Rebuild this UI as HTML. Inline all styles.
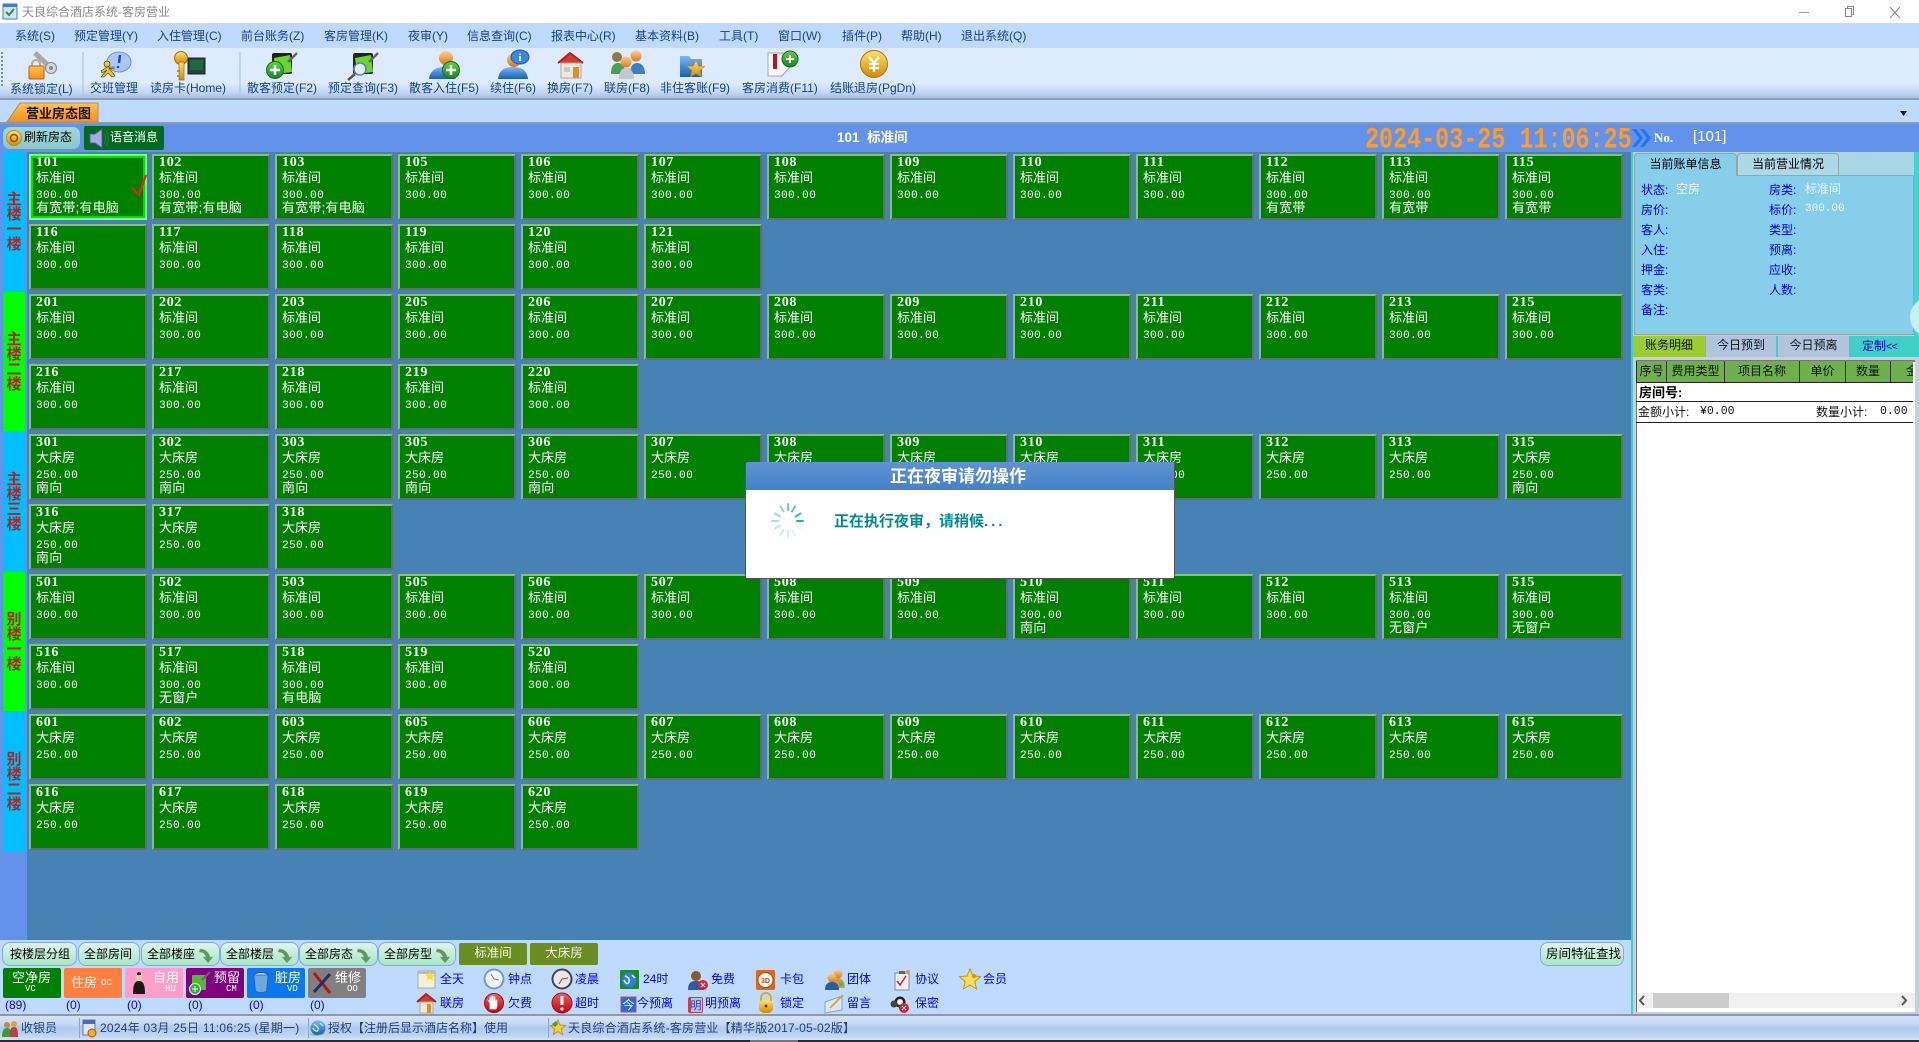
<!DOCTYPE html>
<html lang="zh"><head><meta charset="utf-8"><title>天良综合酒店系统-客房营业</title>
<style>
*{margin:0;padding:0;box-sizing:border-box}
html,body{width:1919px;height:1042px;overflow:hidden;background:#fff}
body{position:relative;font:12px "Liberation Sans","Noto Sans CJK SC",sans-serif;color:#15428b}
.a,.a>span{position:absolute;white-space:nowrap}
.m span{top:28px;line-height:16px}
.tb span{top:80px;line-height:16px}
#stage{position:absolute;left:0;top:0;width:1919px;height:1042px;pointer-events:none}
.r{position:absolute;left:29px;display:flex;gap:5px}
.t{width:118px;height:66px;background:#008000;border:2px solid;border-color:#92b592 #5f735f #5f735f #92b592;padding-left:5px;color:#fff;font-family:"Liberation Sans","WenQuanYi Zen Hei","Noto Sans CJK SC",sans-serif;overflow:hidden}
.t b,.t i,.t u,.t em{display:block;font-style:normal;text-decoration:none;white-space:nowrap}
.t b{font:bold 14px/14px "Liberation Serif",serif;letter-spacing:.7px;height:14px}
.t i{font-size:13px;line-height:16px;height:16px}
.t u{font:11.2px/16px "Liberation Mono",monospace;height:16px;letter-spacing:.3px;position:relative;top:2px}
.t em{font-size:13px;line-height:12px;height:13px;letter-spacing:.2px}
.t.sel{border-color:#7fff7f;box-shadow:inset 0 0 0 2px #00e000}
.f{position:absolute;left:3px;width:22px;color:#b22222;font:bold 15px/15px "Liberation Sans","Noto Sans CJK SC",sans-serif;text-align:center;display:flex;flex-direction:column;justify-content:center}
.btn{position:absolute;top:942px;height:24px;border:1px solid #7fa8f2;border-radius:8px;background:linear-gradient(#dff4ea,#a6e6c6);color:#000;font-size:12px;line-height:22px;padding-left:7px;white-space:nowrap}
.ol{position:absolute;top:943px;height:22px;background:#6b8e23;border-radius:2px;color:#f4f4e4;font-size:12.5px;line-height:21px;text-align:center}
.lg{position:absolute;top:968px;height:30px;width:58px;border-radius:2px;color:#fff;font-size:13px}
.lg span{position:absolute;white-space:nowrap;line-height:14px}
.lg small{position:absolute;font:9px/10px "Liberation Mono",monospace;white-space:nowrap}
.cnt{position:absolute;top:998px;color:#0000ff;font:12px/14px "Liberation Sans",sans-serif}
.li{position:absolute;color:#0000ff;font-size:12px;line-height:14px;white-space:nowrap}
.k{position:absolute;color:#0000e0;font-size:12px;line-height:16px;white-space:nowrap;margin-top:1px}
.v{position:absolute;color:#eaf8ff;font-size:12px;line-height:16px;white-space:nowrap;margin-top:1px}
.th{position:absolute;top:361px;height:22px;background:#6db04c;border-left:1px solid #333;color:#111;font-size:12px;line-height:21px;text-align:center;overflow:hidden;white-space:nowrap}
</style></head><body>

<!-- title bar -->
<div class="a" style="left:22px;top:4px;color:#8a8a8a;line-height:16px">天良综合酒店系统-客房营业</div>

<!-- menu -->
<div class="a" style="left:0;top:23px;width:1919px;height:25px;background:#bedbff"></div>
<div class="a m" style="left:0;top:0">
<span style="left:15px">系统(S)</span><span style="left:74px">预定管理(Y)</span><span style="left:157px">入住管理(C)</span><span style="left:241px">前台账务(Z)</span><span style="left:324px">客房管理(K)</span><span style="left:408px">夜审(Y)</span><span style="left:467px">信息查询(C)</span><span style="left:551px">报表中心(R)</span><span style="left:635px">基本资料(B)</span><span style="left:719px">工具(T)</span><span style="left:778px">窗口(W)</span><span style="left:842px">插件(P)</span><span style="left:901px">帮助(H)</span><span style="left:961px">退出系统(Q)</span>
</div>

<!-- toolbar -->
<div class="a" style="left:0;top:48px;width:1919px;height:50px;background:linear-gradient(#deebfd 0,#dcebff 70%,#c4d8f4 88%,#a8c0e2 100%)"></div>
<div class="a" style="left:0;top:98px;width:1919px;height:2px;background:#8b9db8"></div>
<div class="a tb" style="left:0;top:0">
<span style="left:10px;top:81px">系统锁定(L)</span><span style="left:90px">交班管理</span><span style="left:150px">读房卡(Home)</span><span style="left:247px">散客预定(F2)</span><span style="left:328px">预定查询(F3)</span><span style="left:409px">散客入住(F5)</span><span style="left:490px">续住(F6)</span><span style="left:547px">换房(F7)</span><span style="left:604px">联房(F8)</span><span style="left:660px">非住客账(F9)</span><span style="left:742px">客房消费(F11)</span><span style="left:830px">结账退房(PgDn)</span>
</div>

<!-- tab strip -->
<div class="a" style="left:0;top:100px;width:1919px;height:22px;background:#bedbff"></div>
<div class="a" style="left:0;top:122px;width:1919px;height:2px;background:#8f9aa8"></div>

<!-- main -->
<div class="a" style="left:0;top:124px;width:1919px;height:28px;background:#6392ea"></div>
<div class="a" style="left:0;top:152px;width:27px;height:788px;background:#6392ea"></div>
<div class="a" style="left:27px;top:152px;width:1604px;height:788px;background:#4682b4"></div>

<div class="a" style="left:3px;top:127px;width:77px;height:22px;border-radius:7px;background:linear-gradient(#9fd8d4,#8cc8c8);color:#000;font-size:12px;line-height:21px;padding-left:21px">刷新房态</div>
<div class="a" style="left:84px;top:126px;width:80px;height:24px;border-radius:2px;background:#006b1e;color:#fff;font-size:12px;line-height:23px;padding-left:26px">语音消息</div>
<div class="a" style="left:837px;top:129px;color:#fff;font:bold 13.5px/18px 'Liberation Sans','Noto Sans CJK SC',sans-serif;white-space:pre">101  标准间</div>

<!-- clock -->
<div class="a" style="left:1365px;top:126px;color:#ff9c28;font:bold 23.4px/24px 'Liberation Mono',monospace;transform:scaleY(1.25);transform-origin:0 0;white-space:pre">2024-03-25 11:06:25</div>
<div class="a" style="left:1654px;top:129px;color:#fff;font:bold 13px/18px 'Liberation Serif',serif">No.</div>
<div class="a" style="left:1693px;top:128px;color:#fff;font:15px/18px 'Liberation Sans',sans-serif">[101]</div>

<!-- floor labels -->
<div class="f" style="top:152px;height:139px;background:#00bfff">主<br>楼<br>一<br>楼</div>
<div class="f" style="top:292px;height:139px;background:#00ff00">主<br>楼<br>二<br>楼</div>
<div class="f" style="top:432px;height:139px;background:#00bfff">主<br>楼<br>三<br>楼</div>
<div class="f" style="top:572px;height:139px;background:#00ff00">别<br>楼<br>一<br>楼</div>
<div class="f" style="top:712px;height:140px;background:#00bfff">别<br>楼<br>二<br>楼</div>

<!-- rooms -->
<div class="r" style="top:154px">
<div class="t sel"><b>101</b><i>标准间</i><u>300.00</u><em>有宽带;有电脑</em></div>
<div class="t"><b>102</b><i>标准间</i><u>300.00</u><em>有宽带;有电脑</em></div>
<div class="t"><b>103</b><i>标准间</i><u>300.00</u><em>有宽带;有电脑</em></div>
<div class="t"><b>105</b><i>标准间</i><u>300.00</u></div>
<div class="t"><b>106</b><i>标准间</i><u>300.00</u></div>
<div class="t"><b>107</b><i>标准间</i><u>300.00</u></div>
<div class="t"><b>108</b><i>标准间</i><u>300.00</u></div>
<div class="t"><b>109</b><i>标准间</i><u>300.00</u></div>
<div class="t"><b>110</b><i>标准间</i><u>300.00</u></div>
<div class="t"><b>111</b><i>标准间</i><u>300.00</u></div>
<div class="t"><b>112</b><i>标准间</i><u>300.00</u><em>有宽带</em></div>
<div class="t"><b>113</b><i>标准间</i><u>300.00</u><em>有宽带</em></div>
<div class="t"><b>115</b><i>标准间</i><u>300.00</u><em>有宽带</em></div>
</div>
<div class="r" style="top:224px">
<div class="t"><b>116</b><i>标准间</i><u>300.00</u></div>
<div class="t"><b>117</b><i>标准间</i><u>300.00</u></div>
<div class="t"><b>118</b><i>标准间</i><u>300.00</u></div>
<div class="t"><b>119</b><i>标准间</i><u>300.00</u></div>
<div class="t"><b>120</b><i>标准间</i><u>300.00</u></div>
<div class="t"><b>121</b><i>标准间</i><u>300.00</u></div>
</div>
<div class="r" style="top:294px">
<div class="t"><b>201</b><i>标准间</i><u>300.00</u></div>
<div class="t"><b>202</b><i>标准间</i><u>300.00</u></div>
<div class="t"><b>203</b><i>标准间</i><u>300.00</u></div>
<div class="t"><b>205</b><i>标准间</i><u>300.00</u></div>
<div class="t"><b>206</b><i>标准间</i><u>300.00</u></div>
<div class="t"><b>207</b><i>标准间</i><u>300.00</u></div>
<div class="t"><b>208</b><i>标准间</i><u>300.00</u></div>
<div class="t"><b>209</b><i>标准间</i><u>300.00</u></div>
<div class="t"><b>210</b><i>标准间</i><u>300.00</u></div>
<div class="t"><b>211</b><i>标准间</i><u>300.00</u></div>
<div class="t"><b>212</b><i>标准间</i><u>300.00</u></div>
<div class="t"><b>213</b><i>标准间</i><u>300.00</u></div>
<div class="t"><b>215</b><i>标准间</i><u>300.00</u></div>
</div>
<div class="r" style="top:364px">
<div class="t"><b>216</b><i>标准间</i><u>300.00</u></div>
<div class="t"><b>217</b><i>标准间</i><u>300.00</u></div>
<div class="t"><b>218</b><i>标准间</i><u>300.00</u></div>
<div class="t"><b>219</b><i>标准间</i><u>300.00</u></div>
<div class="t"><b>220</b><i>标准间</i><u>300.00</u></div>
</div>
<div class="r" style="top:434px">
<div class="t"><b>301</b><i>大床房</i><u>250.00</u><em>南向</em></div>
<div class="t"><b>302</b><i>大床房</i><u>250.00</u><em>南向</em></div>
<div class="t"><b>303</b><i>大床房</i><u>250.00</u><em>南向</em></div>
<div class="t"><b>305</b><i>大床房</i><u>250.00</u><em>南向</em></div>
<div class="t"><b>306</b><i>大床房</i><u>250.00</u><em>南向</em></div>
<div class="t"><b>307</b><i>大床房</i><u>250.00</u></div>
<div class="t"><b>308</b><i>大床房</i><u>250.00</u></div>
<div class="t"><b>309</b><i>大床房</i><u>250.00</u></div>
<div class="t"><b>310</b><i>大床房</i><u>250.00</u></div>
<div class="t"><b>311</b><i>大床房</i><u>250.00</u></div>
<div class="t"><b>312</b><i>大床房</i><u>250.00</u></div>
<div class="t"><b>313</b><i>大床房</i><u>250.00</u></div>
<div class="t"><b>315</b><i>大床房</i><u>250.00</u><em>南向</em></div>
</div>
<div class="r" style="top:504px">
<div class="t"><b>316</b><i>大床房</i><u>250.00</u><em>南向</em></div>
<div class="t"><b>317</b><i>大床房</i><u>250.00</u></div>
<div class="t"><b>318</b><i>大床房</i><u>250.00</u></div>
</div>
<div class="r" style="top:574px">
<div class="t"><b>501</b><i>标准间</i><u>300.00</u></div>
<div class="t"><b>502</b><i>标准间</i><u>300.00</u></div>
<div class="t"><b>503</b><i>标准间</i><u>300.00</u></div>
<div class="t"><b>505</b><i>标准间</i><u>300.00</u></div>
<div class="t"><b>506</b><i>标准间</i><u>300.00</u></div>
<div class="t"><b>507</b><i>标准间</i><u>300.00</u></div>
<div class="t"><b>508</b><i>标准间</i><u>300.00</u></div>
<div class="t"><b>509</b><i>标准间</i><u>300.00</u></div>
<div class="t"><b>510</b><i>标准间</i><u>300.00</u><em>南向</em></div>
<div class="t"><b>511</b><i>标准间</i><u>300.00</u></div>
<div class="t"><b>512</b><i>标准间</i><u>300.00</u></div>
<div class="t"><b>513</b><i>标准间</i><u>300.00</u><em>无窗户</em></div>
<div class="t"><b>515</b><i>标准间</i><u>300.00</u><em>无窗户</em></div>
</div>
<div class="r" style="top:644px">
<div class="t"><b>516</b><i>标准间</i><u>300.00</u></div>
<div class="t"><b>517</b><i>标准间</i><u>300.00</u><em>无窗户</em></div>
<div class="t"><b>518</b><i>标准间</i><u>300.00</u><em>有电脑</em></div>
<div class="t"><b>519</b><i>标准间</i><u>300.00</u></div>
<div class="t"><b>520</b><i>标准间</i><u>300.00</u></div>
</div>
<div class="r" style="top:714px">
<div class="t"><b>601</b><i>大床房</i><u>250.00</u></div>
<div class="t"><b>602</b><i>大床房</i><u>250.00</u></div>
<div class="t"><b>603</b><i>大床房</i><u>250.00</u></div>
<div class="t"><b>605</b><i>大床房</i><u>250.00</u></div>
<div class="t"><b>606</b><i>大床房</i><u>250.00</u></div>
<div class="t"><b>607</b><i>大床房</i><u>250.00</u></div>
<div class="t"><b>608</b><i>大床房</i><u>250.00</u></div>
<div class="t"><b>609</b><i>大床房</i><u>250.00</u></div>
<div class="t"><b>610</b><i>大床房</i><u>250.00</u></div>
<div class="t"><b>611</b><i>大床房</i><u>250.00</u></div>
<div class="t"><b>612</b><i>大床房</i><u>250.00</u></div>
<div class="t"><b>613</b><i>大床房</i><u>250.00</u></div>
<div class="t"><b>615</b><i>大床房</i><u>250.00</u></div>
</div>
<div class="r" style="top:784px">
<div class="t"><b>616</b><i>大床房</i><u>250.00</u></div>
<div class="t"><b>617</b><i>大床房</i><u>250.00</u></div>
<div class="t"><b>618</b><i>大床房</i><u>250.00</u></div>
<div class="t"><b>619</b><i>大床房</i><u>250.00</u></div>
<div class="t"><b>620</b><i>大床房</i><u>250.00</u></div>
</div>

<!-- right panel -->
<div class="a" style="left:1631px;top:152px;width:288px;height:864px;background:#40d0c8"></div>
<div class="a" style="left:1633px;top:152px;width:286px;height:184px;background:#a9d6e3"></div>
<div class="a" style="left:1914px;top:152px;width:5px;height:184px;background:#48d1cc"></div>
<div class="a" style="left:1634px;top:175px;width:280px;height:160px;background:#87ceeb;border:1px solid #a0a0a0"></div>
<div class="a" style="left:1634px;top:153px;width:103px;height:23px;background:#87ceeb;border:1px solid #a0a0a0;border-bottom:0;border-radius:4px 4px 0 0;color:#000;font-size:12px;line-height:21px;text-align:center">当前账单信息</div>
<div class="a" style="left:1737px;top:153px;width:102px;height:22px;background:#add8e6;border:1px solid #a0a0a0;border-bottom:0;border-radius:4px 4px 0 0;color:#000;font-size:12px;line-height:21px;text-align:center">当前营业情况</div>

<span class="k" style="left:1641px;top:181px">状态:</span><span class="v" style="left:1676px;top:180px">空房</span>
<span class="k" style="left:1769px;top:181px">房类:</span><span class="v" style="left:1805px;top:180px">标准间</span>
<span class="k" style="left:1641px;top:201px">房价:</span>
<span class="k" style="left:1769px;top:201px">标价:</span><span class="v" style="left:1805px;top:200px;font:11px/16px 'Liberation Mono',monospace">300.00</span>
<span class="k" style="left:1641px;top:221px">客人:</span><span class="k" style="left:1769px;top:221px">类型:</span>
<span class="k" style="left:1641px;top:241px">入住:</span><span class="k" style="left:1769px;top:241px">预离:</span>
<span class="k" style="left:1641px;top:261px">押金:</span><span class="k" style="left:1769px;top:261px">应收:</span>
<span class="k" style="left:1641px;top:281px">客类:</span><span class="k" style="left:1769px;top:281px">人数:</span>
<span class="k" style="left:1641px;top:301px">备注:</span>

<div class="a" style="left:1633px;top:336px;width:72px;height:21px;background:#9acd32;color:#111;font-size:12px;line-height:18px;text-align:center">账务明细</div>
<div class="a" style="left:1705px;top:336px;width:71px;height:21px;background:#b0c4de;border-left:1px solid #9aa;color:#111;font-size:12px;line-height:18px;text-align:center">今日预到</div>
<div class="a" style="left:1777px;top:336px;width:72px;height:21px;background:#b0c4de;border-left:1px solid #9aa;color:#111;font-size:12px;line-height:18px;text-align:center">今日预离</div>
<div class="a" style="left:1862px;top:337px;color:#0000d0;font-size:12px;line-height:18px">定制<span style="position:static;letter-spacing:-1px;font-size:11px">&lt;&lt;</span></div>

<div class="a" style="left:1633px;top:357px;width:286px;height:659px;background:#c8d0dc"></div>
<div class="a" style="left:1636px;top:360px;width:279px;height:652px;background:#fff;border-left:1px solid #777;border-top:2px solid #777"></div>
<div class="th" style="left:1636px;width:30px">序号</div>
<div class="th" style="left:1666px;width:58px">费用类型</div>
<div class="th" style="left:1724px;width:75px">项目名称</div>
<div class="th" style="left:1799px;width:46px">单价</div>
<div class="th" style="left:1845px;width:45px">数量</div>
<div class="th" style="left:1890px;width:23px;text-align:left;padding-left:15px">金额</div>
<div class="a" style="left:1636px;top:382px;width:277px;height:1px;background:#222"></div>
<div class="a" style="left:1639px;top:385px;color:#000;font-weight:bold;font-size:13px;line-height:16px">房间号:</div>
<div class="a" style="left:1636px;top:401px;width:277px;height:1px;background:#222"></div>
<div class="a" style="left:1638px;top:404px;color:#111;font-size:12px;line-height:16px">金额小计:</div>
<div class="a" style="left:1700px;top:404px;color:#111;font:11.5px/16px 'Liberation Mono',monospace">¥0.00</div>
<div class="a" style="left:1816px;top:404px;color:#111;font-size:12px;line-height:16px">数量小计:</div>
<div class="a" style="left:1880px;top:404px;color:#111;font:11.5px/16px 'Liberation Mono',monospace">0.00</div>
<div class="a" style="left:1636px;top:422px;width:277px;height:1px;background:#222"></div>
<div class="a" style="left:1637px;top:993px;width:278px;height:15px;background:#f0f0f0"></div>
<div class="a" style="left:1653px;top:993px;width:76px;height:15px;background:#cdcdcd"></div>

<!-- bottom panel -->
<div class="a" style="left:0;top:940px;width:1631px;height:74px;background:#bedbff"></div>
<div class="a" style="left:0;top:1014px;width:1919px;height:2px;background:#8f98a6"></div>

<div class="btn" style="left:2px;width:75px">按楼层分组</div>
<div class="btn" style="left:78px;width:62px;padding-left:5px">全部房间</div>
<div class="btn" style="left:141px;width:79px;padding-left:5px">全部楼座</div>
<div class="btn" style="left:220px;width:79px;padding-left:5px">全部楼层</div>
<div class="btn" style="left:299px;width:79px;padding-left:5px">全部房态</div>
<div class="btn" style="left:378px;width:78px;padding-left:5px">全部房型</div>
<div class="ol" style="left:459px;width:68px">标准间</div>
<div class="ol" style="left:530px;width:68px">大床房</div>
<div class="btn" style="left:1540px;width:84px;padding-left:5px;font-size:12.5px">房间特征查找</div>

<div class="lg" style="left:3px;background:#008000"><span style="left:9px;top:3px;font-size:13px">空净房</span><small style="left:22px;top:16px">VC</small></div>
<div class="lg" style="left:64px;background:#ff7f3f"><span style="left:7px;top:8px">住房</span><small style="left:37px;top:10px">OC</small></div>
<div class="lg" style="left:125px;background:#ff9ecb"><span style="left:28px;top:3px">自用</span><small style="left:40px;top:16px">HU</small></div>
<div class="lg" style="left:186px;background:#800080"><span style="left:28px;top:3px">预留</span><small style="left:40px;top:16px">CM</small></div>
<div class="lg" style="left:247px;background:#0a78f0"><span style="left:28px;top:3px">脏房</span><small style="left:40px;top:16px">VD</small></div>
<div class="lg" style="left:308px;background:#808080"><span style="left:27px;top:3px">维修</span><small style="left:39px;top:16px">OO</small></div>
<div class="cnt" style="left:5px">(89)</div><div class="cnt" style="left:66px">(0)</div><div class="cnt" style="left:127px">(0)</div><div class="cnt" style="left:188px">(0)</div><div class="cnt" style="left:249px">(0)</div><div class="cnt" style="left:310px">(0)</div>

<span class="li" style="left:440px;top:972px">全天</span><span class="li" style="left:508px;top:972px">钟点</span><span class="li" style="left:575px;top:972px">凌晨</span><span class="li" style="left:643px;top:972px">24时</span><span class="li" style="left:711px;top:972px">免费</span><span class="li" style="left:780px;top:972px">卡包</span><span class="li" style="left:847px;top:972px">团体</span><span class="li" style="left:915px;top:972px">协议</span><span class="li" style="left:983px;top:972px">会员</span>
<span class="li" style="left:440px;top:996px">联房</span><span class="li" style="left:508px;top:996px">欠费</span><span class="li" style="left:575px;top:996px">超时</span><span class="li" style="left:637px;top:996px">今预离</span><span class="li" style="left:705px;top:996px">明预离</span><span class="li" style="left:780px;top:996px">锁定</span><span class="li" style="left:847px;top:996px">留言</span><span class="li" style="left:915px;top:996px">保密</span>

<!-- status bar -->
<div class="a" style="left:0;top:1016px;width:1919px;height:24px;background:linear-gradient(#d4e3fa 0,#c8dbf6 30%,#afc9ee 50%,#bcd3f3 80%,#d3e4fb 100%)"></div>
<div class="a" style="left:0;top:1040px;width:1919px;height:2px;background:#202c3a"></div>
<div class="a" style="left:750px;top:1040px;width:48px;height:2px;background:#707880"></div>
<div class="a" style="left:79px;top:1018px;width:1px;height:20px;background:#8ea6c8"></div>
<div class="a" style="left:308px;top:1018px;width:1px;height:20px;background:#8ea6c8"></div>
<div class="a" style="left:548px;top:1018px;width:1px;height:20px;background:#8ea6c8"></div>
<div class="a" style="left:21px;top:1020px;line-height:16px;color:#1f3f78">收银员</div>
<div class="a" style="left:100px;top:1020px;line-height:16px;color:#1f3f78;letter-spacing:.25px">2024年 03月 25日 11:06:25 (星期一)</div>
<div class="a" style="left:328px;top:1020px;line-height:16px;color:#1f3f78">授权【注册后显示酒店名称】使用</div>
<div class="a" style="left:568px;top:1020px;line-height:16px;color:#1f3f78;letter-spacing:.2px">天良综合酒店系统-客房营业【精华版2017-05-02版】</div>

<!-- all vector icons, in page pixel coordinates -->
<svg id="stage" viewBox="0 0 1919 1042" xmlns="http://www.w3.org/2000/svg">
<defs>
<linearGradient id="or" x1="0" y1="0" x2="0" y2="1"><stop offset="0" stop-color="#ffc44a"/><stop offset="1" stop-color="#ff8c1a"/></linearGradient>
<linearGradient id="au" x1="0" y1="0" x2="0" y2="1"><stop offset="0" stop-color="#ffe36a"/><stop offset="1" stop-color="#d08a00"/></linearGradient>
<linearGradient id="gr" x1="0" y1="0" x2="0" y2="1"><stop offset="0" stop-color="#6ad04a"/><stop offset="1" stop-color="#0e8a22"/></linearGradient>
<linearGradient id="bl" x1="0" y1="0" x2="0" y2="1"><stop offset="0" stop-color="#7ab8f4"/><stop offset="1" stop-color="#1a5cb4"/></linearGradient>
<linearGradient id="fc" x1="0" y1="0" x2="0" y2="1"><stop offset="0" stop-color="#ffd08a"/><stop offset="1" stop-color="#d8781c"/></linearGradient>
<linearGradient id="rd" x1="0" y1="0" x2="0" y2="1"><stop offset="0" stop-color="#f06060"/><stop offset="1" stop-color="#c00010"/></linearGradient>
<linearGradient id="ttl" x1="0" y1="0" x2="0" y2="1"><stop offset="0" stop-color="#6192d4"/><stop offset="1" stop-color="#4382c8"/></linearGradient>
</defs>

<!-- app icon -->
<rect x="3" y="4" width="14" height="15" fill="#cfe8f8" stroke="#3a80c8"/><rect x="3" y="4" width="14" height="3" fill="#3a80c8"/><path d="M6 12l3 3 5-6" fill="none" stroke="#2a9a30" stroke-width="2"/>
<!-- window controls -->
<path d="M1799 12.5h10" stroke="#999"/>
<path d="M1845.5 8.5h6v8h-6zM1847.5 8.5v-2h6v8h-2" fill="none" stroke="#888"/>
<path d="M1890 7l10 11M1900 7l-10 11" stroke="#888"/>
<!-- toolbar grip & separators -->
<path d="M2 52v36" stroke="#6f8fc0" stroke-dasharray="2 2" stroke-width="2"/>
<path d="M83 52v44M240 52v44" stroke="#a9c0e0"/>

<!-- system lock -->
<path d="M35 53l14 13" stroke="#a8a8a8" stroke-width="5"/><circle cx="51" cy="68" r="5.5" fill="#d8d8d8" stroke="#888"/><circle cx="51" cy="68" r="2" fill="#888"/>
<path d="M32 67v-3a4 4 0 0 1 8 0v3" fill="none" stroke="#b8a890" stroke-width="2"/><rect x="29" y="66" width="15" height="13" rx="1" fill="url(#or)" stroke="#b06414"/>
<!-- shift -->
<ellipse cx="119" cy="62" rx="12" ry="10" fill="#a9c9f2" stroke="#6f96d8"/><path d="M120 55l-1 8" stroke="#2a3fd0" stroke-width="2.4"/><circle cx="118" cy="67" r="1.3" fill="#2a3fd0"/>
<circle cx="107" cy="64" r="3" fill="#f7c800" stroke="#222" stroke-width=".6"/><path d="M107 67l-6 4 1 2 5-3-6 7 3 0 4-4 4 4 3-1-6-8 5 1v-2z" fill="#f7c800" stroke="#333" stroke-width=".6"/>
<!-- key -->
<rect x="188" y="58" width="17" height="16" fill="#244" stroke="#222"/><rect x="190" y="60" width="13" height="10" fill="#1f6a3a"/>
<circle cx="181" cy="58" r="6.5" fill="url(#au)" stroke="#a86800"/><rect x="179" y="62" width="5" height="18" fill="url(#au)" stroke="#a86800" stroke-width=".7"/><rect x="177" y="70" width="3" height="2" fill="#c88a10"/><rect x="177" y="75" width="3" height="2" fill="#c88a10"/>
<!-- reservation new -->
<rect x="272" y="53" width="20" height="21" fill="#222" rx="2"/><path d="M274 58l16-3 2 17-16 2z" fill="#68d830"/><path d="M288 62l9-9" stroke="#666" stroke-width="2.5"/>
<circle cx="275" cy="70" r="8.5" fill="url(#gr)" stroke="#1d6a22"/><path d="M275 65v10M270 70h10" stroke="#fff" stroke-width="2.5"/>
<!-- reservation search -->
<rect x="353" y="53" width="20" height="21" fill="#222" rx="2"/><path d="M355 58l16-3 2 17-16 2z" fill="#68d830"/><path d="M369 62l9-9" stroke="#666" stroke-width="2.5"/>
<circle cx="360" cy="69" r="6" fill="#dfeefc" stroke="#6a7fa8" stroke-width="1.5"/><path d="M355 74l-7 6" stroke="#555" stroke-width="2.5"/>
<!-- walk-in -->
<circle cx="446" cy="58" r="7" fill="url(#fc)"/><path d="M429 79c1-9 8-12 15-12s12 3 15 8l-4 4z" fill="url(#bl)"/><circle cx="451" cy="70" r="8.5" fill="url(#gr)" stroke="#1d6a22"/><path d="M451 65v10M446 70h10" stroke="#fff" stroke-width="2.5"/>
<!-- extend -->
<circle cx="514" cy="60" r="7" fill="url(#fc)"/><path d="M498 79c1-9 7-12 15-12s14 3 15 12z" fill="url(#bl)"/><ellipse cx="520" cy="57" rx="9" ry="7" fill="#3a88e0" stroke="#1c5cb0"/><text x="520" y="61" text-anchor="middle" font-family="Liberation Serif,serif" font-weight="bold" font-size="10" fill="#fff">i</text>
<!-- change room -->
<path d="M558 63l12-10 13 10" fill="#d83a30" stroke="#b02020" stroke-width="2"/><rect x="561" y="63" width="20" height="15" fill="#f0e8d8" stroke="#b8a888"/><rect x="573" y="67" width="6" height="11" fill="#d89030"/><rect x="564" y="67" width="6" height="5" fill="#b8cce0"/>
<!-- link room -->
<circle cx="617" cy="57" r="5" fill="#8a7a48"/><path d="M611 74c0-8 3-11 7-11s7 3 7 11z" fill="#4aa050"/><circle cx="636" cy="56" r="5.5" fill="url(#fc)"/><path d="M630 74c0-8 3-11 7-11s8 3 8 11z" fill="#3a80c8"/><circle cx="626" cy="62" r="5.5" fill="url(#fc)"/><path d="M619 79c0-8 3-11 7-11s8 3 8 11z" fill="#c0c8d0"/>
<!-- non-guest -->
<path d="M680 56h9l2 3h11v18h-22z" fill="url(#bl)"/><path d="M696 60l2.5 6 6.5.5-5 4 1.7 6.5-5.700-3.500-5.700 3.500 1.700-6.500-5-4 6.500-.5z" fill="url(#au)" stroke="#c08a20" stroke-width=".5"/>
<!-- room consumption -->
<path d="M768 53h22v14l-8 9h-14z" fill="#f8f8f8" stroke="#a8a8a8"/><rect x="773" y="54" width="4" height="15" fill="#c01020"/><circle cx="790" cy="59" r="8" fill="url(#gr)" stroke="#1d6a22"/><path d="M790 55v8M786 59h8" stroke="#fff" stroke-width="2"/>
<!-- checkout -->
<circle cx="874" cy="64" r="13.500" fill="url(#au)" stroke="#a87800"/><path d="M869 57l5 6 5-6M874 63v9M869 64h10M869 68h10" fill="none" stroke="#fff" stroke-width="2.200"/>

<!-- tab -->
<path d="M7 122l13-19h78v19z" fill="url(#or)" stroke="#a09070"/>
<text x="26" y="118" font-family="Liberation Sans,Noto Sans CJK SC,sans-serif" font-weight="bold" font-size="13" fill="#111">营业房态图</text>
<path d="M1900 111h7l-3.500 5z" fill="#111"/>

<!-- refresh / voice -->
<circle cx="14" cy="138" r="7.500" fill="url(#au)" stroke="#c08a20"/><circle cx="14" cy="138" r="3.500" fill="none" stroke="#904a00" stroke-width="1.500"/>
<path d="M90 134h5l7-5v19l-7-5h-5z" fill="#a9a8e8" stroke="#5a5a9a"/><path d="M104 133c2 3 2 8 0 11M106 131c3 4 3 11 0 15" fill="none" stroke="#208040"/>

<!-- check mark -->
<path d="M132 188l7 7 7-20" fill="none" stroke="#f01c30" stroke-width="2.200"/>
<!-- double chevrons -->
<path d="M1632 129l7 9-7 9h4l7-9-7-9zM1640 129l7 9-7 9h4l7-9-7-9z" fill="#1e78e8"/>
<!-- decorative circle -->
<circle cx="1930" cy="317" r="20" fill="#c4f2ee"/>
<!-- scrollbar arrows -->
<path d="M1644 996l-4 4.500 4 4.500M1902 996l4 4.500-4 4.500" fill="none" stroke="#555" stroke-width="2"/>

<!-- dropdown refresh arrows on buttons -->
<g fill="#5a9a5a" stroke="#9ab09a" stroke-width=".5">
<path d="M200 949c6 0 9 4 10 8h3l-5 6-5-6h3c-1-3-3-5-7-5z"/>
<path d="M279 949c6 0 9 4 10 8h3l-5 6-5-6h3c-1-3-3-5-7-5z"/>
<path d="M358 949c6 0 9 4 10 8h3l-5 6-5-6h3c-1-3-3-5-7-5z"/>
<path d="M437 949c6 0 9 4 10 8h3l-5 6-5-6h3c-1-3-3-5-7-5z"/>
</g>

<!-- legend card icons -->
<circle cx="139" cy="978" r="3.500" fill="#e8c8a8"/><path d="M133 994c0-10 2-13 6-13s6 3 6 13z" fill="#1a1a1a"/><path d="M137 973a3 3 0 0 1 4 0v2h-4z" fill="#111"/>
<rect x="192" y="975" width="14" height="15" rx="1" fill="#55b838"/><path d="M202 980l8-8" stroke="#666" stroke-width="2"/><circle cx="195" cy="989" r="5.500" fill="#3aa838" stroke="#cfe"/><path d="M195 986v6M192 989h6" stroke="#fff"/>
<ellipse cx="261" cy="975" rx="7" ry="2.500" fill="#bcd8f4" stroke="#447"/><path d="M254 975l1.500 16c2 2 9 2 11 0l1.500-16z" fill="#6fa8dc" stroke="#2c5c9c" stroke-width=".7"/>
<path d="M314 973l16 20" stroke="#c01010" stroke-width="3"/><path d="M330 974l-16 18" stroke="#1f2f6f" stroke-width="3"/>

<!-- dialog -->
<rect x="745.500" y="462.500" width="429" height="116" rx="2" fill="#fff" stroke="#555"/>
<path d="M746 490v-26a2 2 0 0 1 2-2h424a2 2 0 0 1 2 2v26z" fill="url(#ttl)"/>
<text x="958" y="482" text-anchor="middle" font-family="Liberation Sans,Noto Sans CJK SC,sans-serif" font-weight="bold" font-size="17" fill="#fff">正在夜审请勿操作</text>
<text x="834" y="526" font-family="Liberation Sans,WenQuanYi Zen Hei,Noto Sans CJK SC,sans-serif" font-weight="bold" font-size="15" fill="#008b8b">正在执行夜审，请稍候<tspan letter-spacing="3">...</tspan></text>
<g stroke="#20b2aa" stroke-width="2" stroke-linecap="round">
<path d="M797 521h6" opacity="1"/>
<path d="M795.500 516.500l5-3" opacity=".9"/>
<path d="M792 511.500l3-5" opacity=".75"/>
<path d="M788 510v-6" opacity=".65"/>
<path d="M783.500 511.500l-3-5" opacity=".55"/>
<path d="M780 516.500l-5-3" opacity=".45"/>
<path d="M778 521h-6" opacity=".4"/>
<path d="M780 525.500l-5 3" opacity=".3"/>
<path d="M783.500 530l-3 5" opacity=".25"/>
<path d="M788 531v6" opacity=".2"/>
<path d="M792 530l3 5" opacity=".15"/>
<path d="M795.500 525.500l5 3" opacity=".08"/>
</g>

<!-- feature icons row 1 -->
<rect x="418" y="971" width="17" height="17" fill="#f4f0d8" stroke="#a8a8a0"/><rect x="418" y="971" width="17" height="3" fill="#bbb"/><path d="M430 971l1.500 3.500 3.500.3-2.700 2.300 1 3.500-3.300-2-3.300 2 1-3.500-2.700-2.300 3.500-.3z" fill="#f8e020"/>
<circle cx="494" cy="979" r="9.500" fill="#f0f4fc" stroke="#6f9ad8" stroke-width="2"/><path d="M494 979l5 1M494 979l-3-5" stroke="#d06050"/>
<circle cx="562" cy="979" r="9.500" fill="#e8e8e8" stroke="#444" stroke-width="2"/><path d="M562 979l6-1M562 979l-3 5" stroke="#c03030"/>
<rect x="620" y="970" width="19" height="19" rx="1" fill="#1a8a2a"/><circle cx="629" cy="980" r="7.500" fill="#3a78d8"/><path d="M625 976c3 1 5 3 4 6s-4 1-5-2M632 975l3 3" fill="none" stroke="#cfe" stroke-width="1.500"/>
<circle cx="696" cy="976" r="5" fill="#8a5a30"/><path d="M688 990c0-7 3-9 8-9s8 2 8 9z" fill="#2a5ca8"/><circle cx="703" cy="985" r="5" fill="#e02030"/><path d="M701 983l4 4M705 983l-4 4" stroke="#fff"/>
<rect x="756" y="970" width="19" height="20" rx="2" fill="#e06818"/><circle cx="765.500" cy="980" r="7.500" fill="#fff" stroke="#c04010"/><text x="765.500" y="983" text-anchor="middle" font-size="7" font-family="Liberation Sans,sans-serif" font-weight="bold" fill="#c04010">3D</text>
<circle cx="838" cy="974" r="4.500" fill="url(#fc)"/><path d="M832 988c0-7 3-10 6-10s7 3 7 10z" fill="#d8983a"/><circle cx="832" cy="978" r="4.500" fill="url(#fc)"/><path d="M825 990c0-6 3-8 7-8s7 2 7 8z" fill="#2a5ca8"/><circle cx="841" cy="984" r="2" fill="#40c040"/>
<rect x="895" y="973" width="14" height="17" fill="#f0f0f0" stroke="#888"/><rect x="899" y="971" width="6" height="3" fill="#666"/><path d="M897 981l3 4 6-9" fill="none" stroke="#d02030" stroke-width="1.500"/><circle cx="908" cy="972" r="2" fill="#f09020"/>
<path d="M970 969l3 7 7.500.6-5.700 5 1.800 7.400-6.600-4-6.600 4 1.800-7.400-5.700-5 7.500-.6z" fill="#f8e050" stroke="#b89a20"/><circle cx="974" cy="976" r="2" fill="#f08020"/>

<!-- feature icons row 2 -->
<path d="M417 1002l9-8 10 8" fill="#d83a30" stroke="#b02020" stroke-width="2"/><rect x="420" y="1002" width="13" height="11" fill="#f0e8d8" stroke="#b8a888"/><rect x="427" y="1004" width="4" height="9" fill="#d89030"/>
<circle cx="494" cy="1003" r="9.500" fill="url(#rd)" stroke="#a01010"/><path d="M490 1009v-6l-2-3 2 1v-4h1v4h1v-5h1v5h1v-4h1v5h1v-2h1v6l-1 3z" fill="#fff" stroke="#fff" stroke-width=".7"/>
<circle cx="562" cy="1003" r="10" fill="url(#rd)" stroke="#a01010"/><path d="M562 996v9" stroke="#fff" stroke-width="3"/><circle cx="562" cy="1009" r="1.600" fill="#fff"/>
<rect x="621" y="997" width="15" height="15" fill="#2a6ae0" stroke="#c05050"/><text x="628.500" y="1009" text-anchor="middle" font-size="12" font-family="Liberation Sans,Noto Sans CJK SC,sans-serif" fill="#fff">今</text>
<rect x="688" y="997" width="15" height="16" rx="2" fill="#c04050"/><rect x="691" y="998" width="11" height="14" fill="#b0c0f0"/><text x="696" y="1009" text-anchor="middle" font-size="11" font-family="Liberation Sans,Noto Sans CJK SC,sans-serif" fill="#2a3fb0">明</text>
<path d="M761 1001v-3a5 5 0 0 1 10 0v3" fill="none" stroke="#d8b020" stroke-width="2"/><rect x="759" y="1000" width="14" height="13" rx="5" fill="url(#au)"/><circle cx="766" cy="1006" r="1.500" fill="#604000"/>
<path d="M825 1002l17-6v14l-17 3z" fill="#dbe6f4" stroke="#8aa0c0"/><path d="M830 1008l13-13" stroke="#d8a040" stroke-width="1.800"/>
<circle cx="900" cy="1002" r="5.500" fill="#222"/><circle cx="900" cy="1002" r="3" fill="#e8f4e8"/><circle cx="894" cy="1004" r="3.500" fill="#444"/><circle cx="904" cy="1008" r="5" fill="#e02030"/><path d="M902 1006l4 4M906 1006l-4 4" stroke="#fff"/>

<!-- status icons -->
<circle cx="7" cy="1025" r="3" fill="#c88a30"/><path d="M2 1037c0-7 2-9 5-9s5 2 5 9z" fill="#3a9a40"/><circle cx="14" cy="1024" r="3" fill="#e0a040"/><path d="M10 1037c0-8 1-10 4-10s4 2 4 10z" fill="#c04040"/>
<rect x="83" y="1020" width="12" height="15" fill="#dfe8f8" stroke="#5a7ac0"/><rect x="83" y="1020" width="12" height="4" fill="#4a6ac0"/><circle cx="92" cy="1033" r="4" fill="#f0b020" stroke="#d04010"/>
<circle cx="318" cy="1028" r="7.500" fill="url(#bl)"/><path d="M314 1024c2 2 5 3 4 6s-4 0-5-2M320 1023l3 3" fill="none" stroke="#bfe8b0" stroke-width="1.500"/><path d="M310 1034c4 2 11 2 15-1" stroke="#8ad070" fill="none"/>
<path d="M557 1020l2 5 5.500.5-4.200 3.500 1.300 5.500-4.600-3-4.600 3 1.300-5.500-4.200-3.500 5.500-.5z" fill="#f8d030" stroke="#c89020" transform="translate(1 0)"/><path d="M552 1024l4-3 2 3-3 3z" fill="#40a040"/>
</svg>
</body></html>
